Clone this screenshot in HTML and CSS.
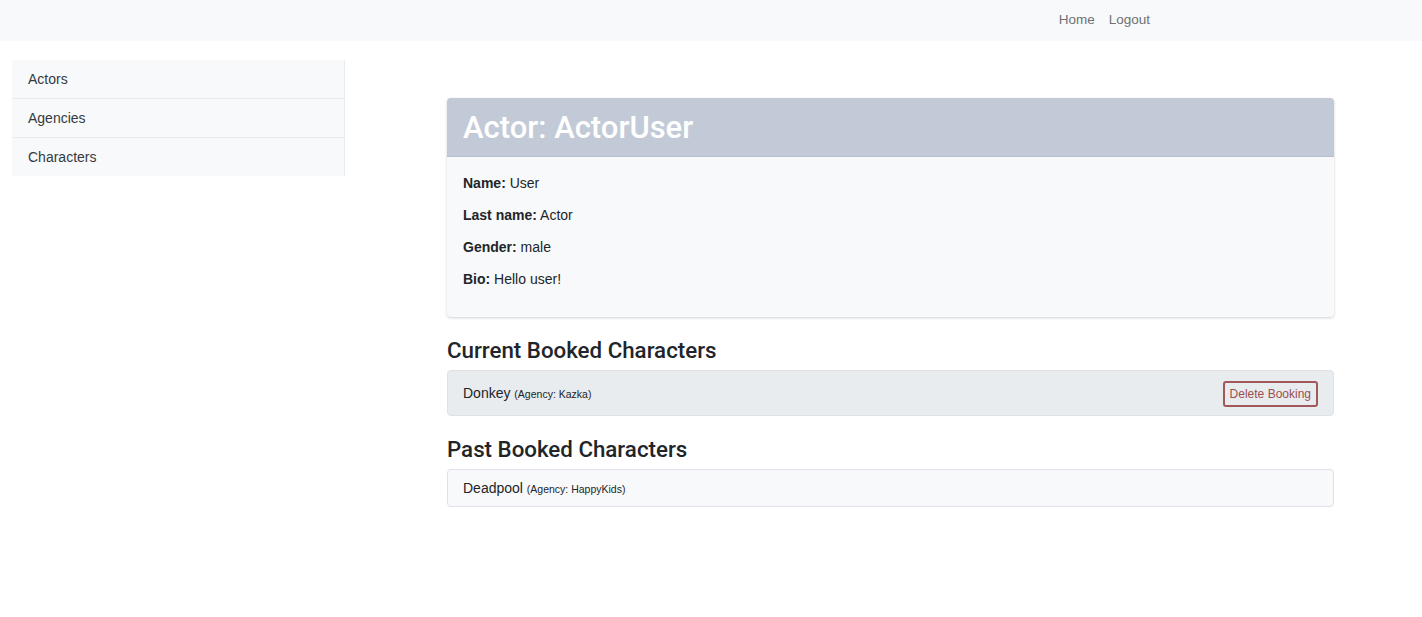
FILE: index.html
```html
<!DOCTYPE html>
<html lang="en">
<head>
<meta charset="utf-8">
<title>Actor: ActorUser</title>
<link rel="stylesheet" href="styles.css">
</head>
<body>
<nav class="navbar">
  <ul class="nav-links">
    <li><a href="#">Home</a></li>
    <li><a href="#">Logout</a></li>
  </ul>
</nav>
<div class="layout">
  <aside class="sidebar">
    <a class="side-item" href="#">Actors</a>
    <a class="side-item" href="#">Agencies</a>
    <a class="side-item" href="#">Characters</a>
  </aside>
  <main class="main">
    <section class="card">
      <header class="card-header"><h1>Actor: ActorUser</h1></header>
      <div class="card-body">
        <p><b>Name:</b> User</p>
        <p><b>Last name:</b> Actor</p>
        <p><b>Gender:</b> male</p>
        <p><b>Bio:</b> Hello user!</p>
      </div>
    </section>
    <h2 class="section-title">Current Booked Characters</h2>
    <div class="booking current">
      <span class="char">Donkey <small>(Agency: Kazka)</small></span>
      <button class="btn-delete">Delete Booking</button>
    </div>
    <h2 class="section-title">Past Booked Characters</h2>
    <div class="booking past">
      <span class="char">Deadpool <small>(Agency: HappyKids)</small></span>
    </div>
  </main>
</div>
</body>
</html>
```
FILE: styles.css
```css
* { box-sizing: border-box; }
body {
  margin: 0;
  font-family: "Liberation Sans", Arial, sans-serif;
  color: #212529;
  background: #fff;
}
.navbar {
  height: 41px;
  background: #f8f9fa;
  display: flex;
  justify-content: flex-end;
  align-items: center;
  padding-right: 272px;
  padding-bottom: 3px;
}
.nav-links {
  list-style: none;
  margin: 0;
  padding: 0;
  display: flex;
  gap: 14px;
}
.nav-links a {
  color: #6f7174;
  text-decoration: none;
  font-size: 13.5px;
}
.layout {
  display: flex;
  align-items: flex-start;
  padding-top: 19px;
}
.sidebar {
  flex: 0 0 333px;
  margin-left: 12px;
  background: #f8f9fa;
  border-right: 1px solid #e9ecef;
  display: flex;
  flex-direction: column;
}
.side-item {
  height: 39px;
  display: flex;
  align-items: center;
  padding-left: 16px;
  color: #343a40;
  text-decoration: none;
  font-size: 14px;
  border-bottom: 1px solid #e9ecef;
}
.side-item:last-child { border-bottom: none; height: 38px; }
.main {
  margin-left: 102px;
  width: 887px;
  padding-top: 38px;
}
.card {
  border-radius: 4px;
  background: #f8f9fa;
  box-shadow: 0 1px 3px rgba(0,0,0,0.18);
  overflow: hidden;
}
.card-header {
  background: #c3cad7;
  height: 59px;
  display: flex;
  align-items: center;
  padding: 0 16px;
  border-bottom: 1px solid #b6bfcf;
}
.card-header h1 {
  margin: 0;
  color: #fff;
  font-family: Roboto, "Liberation Sans", sans-serif;
  font-weight: 500;
  font-size: 31px;
}
.card-body {
  padding: 14px 16px 18px;
}
.card-body p {
  margin: 0 0 8px;
  font-size: 14px;
  line-height: 24px;
}
.card-body b { font-weight: 700; }
.section-title {
  margin: 19px 0 6px;
  font-family: Roboto, "Liberation Sans", sans-serif;
  font-size: 22.3px;
  font-weight: 500;
  line-height: 28px;
}
.booking {
  border: 1px solid #dee2e6;
  border-radius: 4px;
  display: flex;
  align-items: center;
  justify-content: space-between;
  padding: 0 15px;
}
.booking.current { background: #e9ecef; height: 46px; }
.booking.past { background: #f8f9fa; height: 38px; }
.char { font-size: 14px; }
.char small { font-size: 10.5px; }
.btn-delete {
  font-family: inherit;
  font-size: 12px;
  color: #9c4f4f;
  background: transparent;
  border: 2px solid #a0585a;
  border-radius: 3px;
  padding: 0 5px;
  height: 26px;
  margin-top: 1px;
}
```
